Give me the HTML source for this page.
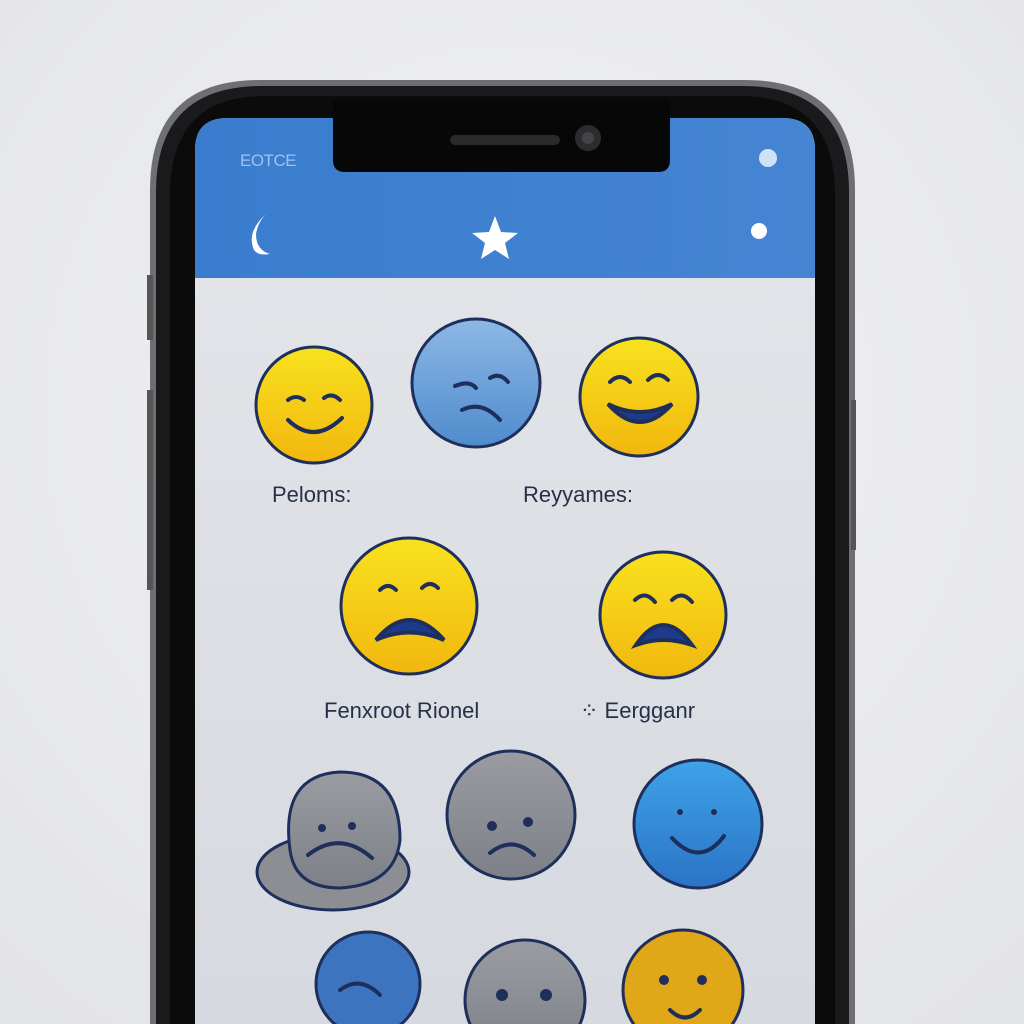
<!DOCTYPE html>
<html><head><meta charset="utf-8"><style>
html,body{margin:0;padding:0;width:1024px;height:1024px;overflow:hidden;background:#e9eaed;}
svg{display:block}
text{font-family:"Liberation Sans",sans-serif;}
</style></head><body>
<svg width="1024" height="1024" viewBox="0 0 1024 1024">
<defs>
<radialGradient id="bg" cx="0.5" cy="0.4" r="0.8"><stop offset="0" stop-color="#f2f2f4"/><stop offset="1" stop-color="#e2e3e7"/></radialGradient>
<linearGradient id="yel" x1="0" y1="0" x2="0" y2="1"><stop offset="0" stop-color="#f8e21e"/><stop offset="1" stop-color="#f2b70f"/></linearGradient>
<linearGradient id="blu" x1="0" y1="0" x2="0" y2="1"><stop offset="0" stop-color="#8db8e6"/><stop offset="1" stop-color="#4f8bcc"/></linearGradient>
<linearGradient id="blu2" x1="0" y1="0" x2="0" y2="1"><stop offset="0" stop-color="#3ea3e8"/><stop offset="1" stop-color="#2b73c6"/></linearGradient>
<linearGradient id="gry" x1="0" y1="0" x2="0" y2="1"><stop offset="0" stop-color="#9a9ca2"/><stop offset="1" stop-color="#7d8087"/></linearGradient>
<linearGradient id="scr" x1="0" y1="0" x2="0" y2="1"><stop offset="0" stop-color="#e4e6ea"/><stop offset="1" stop-color="#d6d9df"/></linearGradient>
<linearGradient id="hdr" x1="0" y1="0" x2="1" y2="0"><stop offset="0" stop-color="#3a7ccd"/><stop offset="1" stop-color="#4585d2"/></linearGradient>
</defs>
<rect width="1024" height="1024" fill="url(#bg)"/>
<path d="M150 1024 V190 Q150 80 260 80 H745 Q855 80 855 190 V1024 Z" fill="#6d6f74"/>
<path d="M156 1024 V192 Q156 86 262 86 H743 Q849 86 849 192 V1024 Z" fill="#1a1a1c"/>
<path d="M170 1024 V195 Q170 96 265 96 H740 Q835 96 835 195 V1024 Z" fill="#0b0b0c"/>
<rect x="147" y="275" width="6" height="65" fill="#555"/>
<rect x="147" y="390" width="6" height="200" fill="#555"/>
<rect x="851" y="400" width="5" height="150" fill="#555"/>
<path d="M195 1024 V150 Q195 118 228 118 H782 Q815 118 815 150 V1024 Z" fill="url(#scr)"/>
<path d="M195 278 V150 Q195 118 228 118 H782 Q815 118 815 150 V278 Z" fill="url(#hdr)"/>
<path d="M333 100 H670 V160 Q670 172 658 172 H345 Q333 172 333 160 Z" fill="#070708"/>
<rect x="450" y="135" width="110" height="10" rx="5" fill="#2a2a2d"/>
<circle cx="588" cy="138" r="13" fill="#2c2c30"/><circle cx="588" cy="138" r="6" fill="#444"/>
<text x="240" y="166" font-size="17" fill="#9fc3ee" letter-spacing="-0.5">EOTCE</text>
<circle cx="768" cy="158" r="9" fill="#cfe1f6"/>
<path d="M266 214 Q246 232 254 250 Q258 256 270 254 Q256 250 256 234 Q258 222 266 214Z" fill="#fff"/>
<polygon points="495,216 501,232 518,233 505,243 509,259 495,250 481,259 485,243 472,233 489,232" fill="#fff"/>
<circle cx="759" cy="231" r="8" fill="#fff"/>
<g stroke="#1e2f5c" stroke-width="3">
<circle cx="314" cy="405" r="58" fill="url(#yel)"/>
<circle cx="476" cy="383" r="64" fill="url(#blu)"/>
<circle cx="639" cy="397" r="59" fill="url(#yel)"/>
<circle cx="409" cy="606" r="68" fill="url(#yel)"/>
<circle cx="663" cy="615" r="63" fill="url(#yel)"/>
<ellipse cx="333" cy="872" rx="76" ry="38" fill="#8c8e94"/>
<path d="M290 850 Q280 775 340 772 Q400 772 400 840 Q395 885 340 888 Q295 888 290 850Z" fill="url(#gry)"/>
<circle cx="511" cy="815" r="64" fill="url(#gry)"/>
<circle cx="698" cy="824" r="64" fill="url(#blu2)"/>
<circle cx="368" cy="984" r="52" fill="#3d74bf"/>
<circle cx="525" cy="1000" r="60" fill="url(#gry)"/>
<circle cx="683" cy="990" r="60" fill="#e0a818"/>
</g>
<g fill="none" stroke="#1e2f5c" stroke-width="4" stroke-linecap="round">
<path d="M288 400 Q296 394 304 400"/><path d="M324 398 Q332 392 340 400"/>
<path d="M288 420 Q314 445 342 418"/>
<path d="M455 386 Q470 380 476 388"/><path d="M490 378 Q500 372 508 382"/>
<path d="M462 410 Q482 400 500 420"/>
<path d="M610 382 Q620 372 630 382"/><path d="M648 380 Q658 370 668 380"/>
<path d="M608 404 Q640 440 672 404 Q640 420 608 404Z" fill="#1e3a8a"/>
<path d="M380 590 Q388 582 396 590"/><path d="M422 588 Q430 580 438 588"/>
<path d="M376 640 Q409 600 444 640 Q409 625 376 640Z" fill="#1e3a8a"/>
<path d="M635 600 Q645 590 655 602"/><path d="M672 600 Q682 590 692 602"/>
<path d="M636 645 Q663 605 692 645 Q663 635 636 645Z" fill="#1e3a8a"/>
<path d="M308 855 Q340 830 372 858"/>
<path d="M490 853 Q512 835 534 855"/>
<path d="M672 838 Q700 868 724 836"/>
<path d="M340 990 Q360 975 380 995"/>
<path d="M670 1010 Q685 1025 700 1010"/>
</g>
<g fill="#1e2f5c">
<circle cx="322" cy="828" r="4"/><circle cx="352" cy="826" r="4"/>
<circle cx="492" cy="826" r="5"/><circle cx="528" cy="822" r="5"/>
<circle cx="680" cy="812" r="3"/><circle cx="714" cy="812" r="3"/>
<circle cx="502" cy="995" r="6"/><circle cx="546" cy="995" r="6"/>
<circle cx="664" cy="980" r="5"/><circle cx="702" cy="980" r="5"/>
</g>
<text x="272" y="502" font-size="22" fill="#283048">Peloms:</text>
<text x="523" y="502" font-size="22" fill="#283048">Reyyames:</text>
<text x="324" y="718" font-size="22" fill="#283048">Fenxroot Rionel</text>
<text x="580" y="718" font-size="22" fill="#283048">⁘ Eergganr</text>
</svg>
</body></html>
